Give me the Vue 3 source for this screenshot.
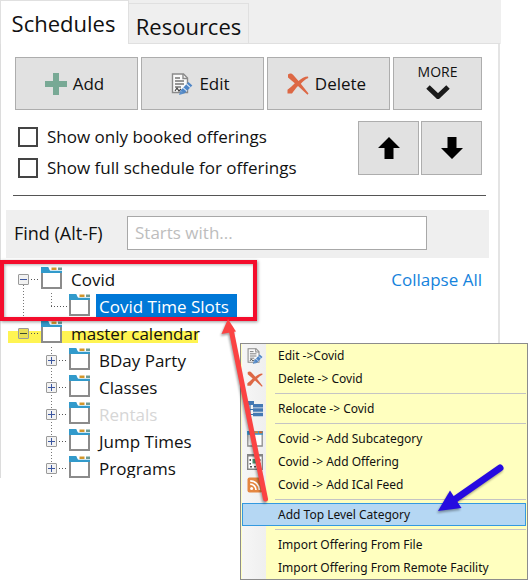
<script setup>
import { ref } from 'vue'

const tree = ref([
  { name: 'Covid', children: [{ name: 'Covid Time Slots', selected: true, leaf: true }] },
  {
    name: 'master calendar',
    marked: true,
    children: [
      { name: 'BDay Party' },
      { name: 'Classes' },
      { name: 'Rentals', dim: true },
      { name: 'Jump Times' },
      { name: 'Programs' },
    ],
  },
])

const menu = [
  [{ text: 'Edit ->Covid', icon: 'edit' }, { text: 'Delete -> Covid', icon: 'delete' }],
  [{ text: 'Relocate -> Covid', icon: 'relocate' }],
  [
    { text: 'Covid -> Add Subcategory', icon: 'window' },
    { text: 'Covid -> Add Offering', icon: 'calendar' },
    { text: 'Covid -> Add ICal Feed', icon: 'feed' },
  ],
  [{ text: 'Add Top Level Category', active: true }],
  [{ text: 'Import Offering From File' }, { text: 'Import Offering From Remote Facility' }],
]
</script>

<template>
  <div class="page">
    <svg class="defs" width="0" height="0" aria-hidden="true">
      <symbol id="i-edit" viewBox="0 0 22 22">
        <path d="M1.500 1h11l4 4v14.500h-15z" fill="#fafafa" stroke="#8a8a8a" stroke-width="1.400" />
        <path d="M12 1v4.500h4.500" fill="none" stroke="#8a8a8a" stroke-width="1.400" />
        <path d="M4 5h5M4 8h9M4 11h9M4 14h6" stroke="#777" stroke-width="1.300" />
        <path d="M4 18l2-3 2 3 2-2" fill="none" stroke="#444" stroke-width="1.200" />
        <path d="M9.500 17.500l8-8.500 3.800 3.500-8 8z" fill="#4f86c6" />
        <path d="M15.500 11l4 3.600M12 14.600l4 3.600" stroke="#dce8f6" stroke-width="1.100" />
        <path d="M9.500 17.500l3.800 3-5.300 1.500z" fill="#5b8fca" />
      </symbol>
      <symbol id="i-delete" viewBox="0 0 22 22">
        <path d="M1 1.500c2-1.500 4-1 5.500.8l5 5.700c3-2.500 6-4.500 9.500-4.500l.3 1.500c-3 1.200-5.300 3.300-7.500 5.700l7.700 9.800-1 1.200-9.500-8.600c-2.500 2.500-4 5-6 7.300H.5v-3.600c2.500-2 5-4.200 7.300-6.600L1 4.500z" fill="#dd6845" />
      </symbol>
      <symbol id="i-relocate" viewBox="0 0 16 16">
        <path d="M3 4v9.500h4M3 8.500h4" fill="none" stroke="#3c6ea5" stroke-width="1.200" />
        <path d="M0 0h7v4H0zM6 3h10v3.500H6zM6 7.300h10v3.500H6zM6 11.700h10v3.500H6z" fill="#4479b3" />
      </symbol>
      <symbol id="i-window" viewBox="0 0 16 16">
        <path d="M.8 1h14.400v14H.8z" fill="#fff" stroke="#8c8c8c" stroke-width="1.300" />
        <path d="M0 0h16v3.800H0z" fill="#3a97cf" />
        <path d="M7.500 .3h3.500v2H7.500z" fill="#e0872d" />
        <path d="M12 .3h3.500v2H12z" fill="#d9682b" />
      </symbol>
      <symbol id="i-calendar" viewBox="0 0 16 16">
        <path d="M.7 .7h14.600v14.600H.7z" fill="#fff" stroke="#858585" stroke-width="1.400" />
        <path d="M0 0h16v2.500H0z" fill="#858585" />
        <path d="M2.500 5h1.500v2H2.500zM12 5h1.500v2H12zM2.500 9h1.500v1.500H2.500zM12 9h1.500v1.500H12zM3 12h2v1.500H3zM7 12h2v1.500H7zM11 12h2v1.500h-2z" fill="#555" />
        <path d="M5.500 5h4.500v4.500H5.500z" fill="#4f9b77" />
      </symbol>
      <symbol id="i-feed" viewBox="0 0 16 16">
        <rect width="15" height="15" x=".5" y=".5" rx="2" fill="#e58640" />
        <circle cx="4.600" cy="11.600" r="1.500" fill="#fff" />
        <path d="M3.200 7.200a5.800 5.800 0 0 1 5.800 5.800M3.200 3.800a9.200 9.200 0 0 1 9.200 9.200" fill="none" stroke="#fff" stroke-width="1.700" />
      </symbol>
      <symbol id="i-folder" viewBox="0 0 22 22">
        <path d="M1 5h19v16H1z" fill="#fff" stroke="#8b8b8b" stroke-width="2" />
        <path d="M0 0h7c1 0 1 3.800 3 3.800h11V6H0z" fill="#329acb" />
        <path d="M10.500 .5h5v2.500h-5z" fill="#d2962c" />
        <path d="M17 .5h4v2.500h-4z" fill="#6d9a94" />
      </symbol>
    </svg>

    <section class="panel">
      <nav class="tabs" role="tablist">
        <button class="tab current" role="tab" aria-selected="true">Schedules</button>
        <button class="tab" role="tab" aria-selected="false">Resources</button>
        <span class="strip"></span>
      </nav>

      <div class="body">
        <div class="actions">
          <button class="btn wide">
            <svg class="ic" viewBox="0 0 22 22"><path d="M8 0h6v8h8v6h-8v8H8v-8H0V8h8z" fill="#78a995" /></svg>
            Add
          </button>
          <button class="btn wide"><svg class="ic"><use href="#i-edit" /></svg>Edit</button>
          <button class="btn wide"><svg class="ic"><use href="#i-delete" /></svg>Delete</button>
          <button class="btn more">
            MORE
            <svg class="chev" viewBox="0 0 24 14"><path d="M2 2l10 9.500L22 2" fill="none" stroke="#1a1a1a" stroke-width="5" /></svg>
          </button>
        </div>

        <div class="options">
          <div class="checks">
            <label class="check"><input type="checkbox" />Show only booked offerings</label>
            <label class="check"><input type="checkbox" />Show full schedule for offerings</label>
          </div>
          <div class="movers">
            <button class="btn move" aria-label="Move up">
              <svg class="arrow" viewBox="0 0 22 22"><path d="M11 0l11 11h-6.500v11h-9V11H0z" /></svg>
            </button>
            <button class="btn move" aria-label="Move down">
              <svg class="arrow" viewBox="0 0 22 22"><path d="M11 22L0 11h6.500V0h9v11H22z" /></svg>
            </button>
          </div>
        </div>

        <hr class="rule" />

        <div class="find">
          <label for="find">Find (Alt-F)</label>
          <input id="find" class="field" type="text" placeholder="Starts with..." />
        </div>

        <div class="listing">
          <ul class="tree">
            <li v-for="node in tree" :key="node.name" class="branch">
              <div class="row" :class="{ marked: node.marked }">
                <button class="toggle minus" aria-label="Collapse"></button>
                <span class="dots"></span>
                <svg class="folder"><use href="#i-folder" /></svg>
                <span class="name">{{ node.name }}</span>
              </div>
              <ul class="kids">
                <li v-for="kid in node.children" :key="kid.name" class="row kid">
                  <span v-if="kid.leaf" class="elbow"></span>
                  <button v-else class="toggle plus" aria-label="Expand"></button>
                  <span v-if="!kid.leaf" class="dots"></span>
                  <svg class="folder"><use href="#i-folder" /></svg>
                  <span class="name" :class="{ selected: kid.selected, dim: kid.dim }">{{ kid.name }}</span>
                </li>
              </ul>
            </li>
          </ul>
          <a class="collapse" href="#">Collapse All</a>
        </div>
      </div>
    </section>

    <div class="frame"></div>

    <div class="menu" role="menu">
      <div v-for="(group, g) in menu" :key="g" class="group">
        <button v-for="item in group" :key="item.text" class="item" :class="{ active: item.active }" role="menuitem">
          <span class="slot"><svg v-if="item.icon" class="mini"><use :href="'#i-' + item.icon" /></svg></span>
          {{ item.text }}
        </button>
      </div>
    </div>

    <svg class="marks" width="528" height="581" viewBox="0 0 528 581" aria-hidden="true">
      <g class="red">
        <path d="M231 329L265.500 499" stroke="#fb4343" stroke-width="5" stroke-linecap="round" />
        <path d="M228 319L221.500 334L236 331.500z" fill="#fb4343" />
      </g>
      <g class="blue">
        <path d="M500 468L454 500" stroke="#260be0" stroke-width="7" stroke-linecap="round" />
        <path d="M438 511L450 490.500L461.500 508z" fill="#260be0" />
      </g>
    </svg>
  </div>
</template>

<style>
body {
  margin: 0;
  background: #fff;
}
</style>

<style scoped>
.page {
  position: relative;
  min-height: 581px;
  overflow: hidden;
  font-family: "Open Sans", "Noto Sans", sans-serif;
  font-size: 17px;
  color: #111;
}
.page * {
  box-sizing: border-box;
}
.defs {
  position: absolute;
}
button,
input {
  font: inherit;
  color: inherit;
  margin: 0;
}
button {
  padding: 0;
  border: 0;
}
ul {
  list-style: none;
  margin: 0;
  padding: 0;
}
.panel {
  margin-right: 27px;
}
.tabs {
  display: flex;
  align-items: flex-end;
  height: 44px;
  padding-right: 1px;
  background: #efefef;
}
.tab {
  height: 41px;
  width: 120px;
  padding-top: 4px;
  font-size: 22px;
  line-height: 30px;
  background: #efefef;
  border: 1px solid #e0e0e0;
  border-left: 0;
}
.tab.current {
  height: 44px;
  width: 129px;
  padding: 0 2px 0 0;
  background: #fff;
  border: 1px solid #e0e0e0;
  border-bottom: 0;
}
.strip {
  flex: 1;
  height: 1px;
  background: #e0e0e0;
}
.body {
  height: 434px;
  overflow: hidden;
  margin-right: 1px;
  border-left: 1px solid #dcdcdc;
  border-right: 2px solid #e4e4e4;
  padding: 13px 9px 0 5px;
}
.actions {
  display: grid;
  grid-template-columns: 123fr 123fr 123fr 89fr;
  gap: 3px;
  padding: 0 7px 0 9px;
}
.btn {
  display: flex;
  align-items: center;
  justify-content: center;
  background: #e1e1e1;
  border: 1px solid #adadad;
}
.btn.wide {
  height: 53px;
  gap: 6px;
  padding-right: 4px;
}
.btn.more {
  flex-direction: column;
  gap: 4px;
  padding-bottom: 6px;
  font-size: 14px;
  line-height: 18px;
}
.ic {
  width: 22px;
  height: 22px;
}
.chev {
  width: 24px;
  height: 14px;
}
.options {
  display: flex;
  justify-content: space-between;
  padding: 11px 7px 0 12px;
}
.check {
  display: flex;
  align-items: center;
  gap: 9px;
  height: 31px;
}
.check input {
  appearance: none;
  width: 20px;
  height: 20px;
  background: #fff;
  border: 2px solid #444;
}
.movers {
  display: flex;
  gap: 2px;
}
.btn.move {
  width: 61px;
  height: 54px;
}
.arrow {
  width: 22px;
  height: 22px;
  fill: #000;
}
.rule {
  height: 1px;
  margin: 12px 3px 14px 7px;
  border: 0;
  background: #555;
}
.find {
  display: flex;
  align-items: center;
  height: 48px;
  padding: 0 0 2px 8px;
  background: #efefef;
}
.find label {
  width: 113px;
  font-size: 18px;
  white-space: nowrap;
}
.field {
  flex: 0 1 300px;
  width: 300px;
  height: 34px;
  padding: 0 7px 2px;
  background: #fff;
  border: 1px solid #a8a8a8;
}
.field::placeholder {
  color: #bdbdbd;
  opacity: 1;
}
.listing {
  display: flex;
  justify-content: space-between;
  padding: 8px 7px 0 0;
}
.tree {
  flex: 1;
}
.row {
  display: flex;
  align-items: center;
  height: 27px;
  padding-left: 12px;
}
.row > * {
  flex-shrink: 0;
}
.row.marked {
  width: 190px;
  margin-left: 2px;
  padding-left: 10px;
  background: linear-gradient(#fff452, #fff452) 0 11px / 100% 12px no-repeat;
}
.branch:first-child {
  background: repeating-linear-gradient(#777 0 1px, transparent 1px 3px) 17px 19px / 1px 100% no-repeat;
}
.kids {
  margin-left: 28px;
  background: repeating-linear-gradient(#777 0 1px, transparent 1px 3px) 17px 0 / 1px 100% no-repeat;
}
.branch:first-child .kids {
  background-size: 1px 14px;
}
.toggle {
  width: 11px;
  height: 11px;
  border: 1px solid #9a9a9a;
  border-radius: 1px;
  background: linear-gradient(#3c57a0, #3c57a0) 1px 4px / 7px 1px no-repeat, #f2f2f2;
}
.marked .toggle {
  background: linear-gradient(#3b4a30, #3b4a30) 1px 4px / 7px 1px no-repeat, #e9de55;
}
.toggle.plus {
  background: linear-gradient(#3c57a0, #3c57a0) 1px 4px / 7px 1px no-repeat,
    linear-gradient(#3c57a0, #3c57a0) 4px 1px / 1px 7px no-repeat, #f2f2f2;
}
.dots {
  width: 8px;
  height: 1px;
  margin: 0 2px;
  background: repeating-linear-gradient(90deg, #555 0 1px, transparent 1px 3px);
}
.elbow {
  width: 18px;
  height: 1px;
  margin-left: 5px;
  background: repeating-linear-gradient(90deg, #555 0 1px, transparent 1px 3px);
}
.folder {
  width: 22px;
  height: 22px;
  margin-bottom: 3px;
}
.name {
  margin-left: 5px;
  padding: 0 3px;
  line-height: 18px;
  white-space: nowrap;
}
.name.selected {
  padding: 4px 8px 4px 3px;
  color: #fff;
  background: #0078d7;
}
.name.dim {
  color: #d6d6d6;
}
.collapse {
  margin-top: 2px;
  color: #1583dc;
  text-decoration: none;
  white-space: nowrap;
}
.frame {
  position: absolute;
  left: 0;
  top: 260px;
  width: 257px;
  height: 61px;
  border: 4px solid #f40d2c;
  box-shadow: 1px 1px 3px rgba(0, 0, 0, 0.4), inset 1px 1px 3px rgba(0, 0, 0, 0.3);
}
.menu {
  position: absolute;
  top: 343px;
  left: 240px;
  right: 0;
  padding: 0 1px;
  border: 1px solid #8c8c8c;
  background: linear-gradient(90deg, #f6f6f6, #efefef) 1px 0 / 24px 100% no-repeat, #ffffbf;
  font-family: "Noto Sans", "Open Sans", sans-serif;
  font-size: 12px;
}
.group + .group::before {
  content: "";
  display: block;
  height: 1px;
  margin: 3px 0 3px 33px;
  background: #c4c4c4;
}
.item {
  display: flex;
  align-items: center;
  width: 100%;
  height: 23px;
  background: none;
  border: 1px solid transparent;
  white-space: nowrap;
}
.item.active {
  background: #b5d7f3;
  border-color: #3399e0;
}
.slot {
  display: flex;
  width: 35px;
  padding-left: 4px;
}
.mini {
  width: 16px;
  height: 16px;
}
.marks {
  position: absolute;
  left: 0;
  top: 0;
  pointer-events: none;
}
.red,
.blue {
  filter: drop-shadow(-1px 2px 1px rgba(0, 0, 0, 0.35));
}
</style>
